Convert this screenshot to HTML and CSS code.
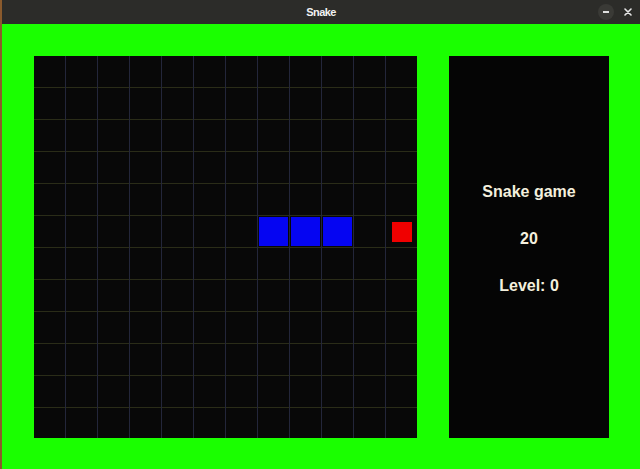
FILE: index.html
```html
<!DOCTYPE html>
<html>
<head>
<meta charset="utf-8">
<title>Snake</title>
<link rel="stylesheet" href="styles.css">
</head>
<body>
<div class="window">
  <div class="titlebar">
    <div class="tb-side"></div>
    <div class="tb-title">Snake</div>
    <div class="tb-side tb-buttons">
      <span class="tb-btn tb-min"><span class="dash"></span></span>
      <span class="tb-btn tb-close">
        <svg width="8" height="8" viewBox="0 0 8 8"><path d="M1 1L7 7M7 1L1 7" stroke="#e6e6e6" stroke-width="1.6" stroke-linecap="round"/></svg>
      </span>
    </div>
  </div>
  <div class="content">
    <div class="board">
      <div class="seg" style="grid-column:8;grid-row:6"></div>
      <div class="seg" style="grid-column:9;grid-row:6"></div>
      <div class="seg" style="grid-column:10;grid-row:6"></div>
      <div class="food" style="grid-column:12;grid-row:6"></div>
    </div>
    <div class="panel">
      <div class="line">Snake game</div>
      <div class="line">20</div>
      <div class="line">Level: 0</div>
    </div>
  </div>
</div>
</body>
</html>
```
FILE: styles.css
```css
html, body {
  margin: 0;
  padding: 0;
}
body {
  width: 640px;
  height: 469px;
  overflow: hidden;
  background: #8a5a2c;
  padding-left: 2px;
  box-sizing: border-box;
  display: flex;
}
.window {
  flex: 1;
  display: flex;
  flex-direction: column;
  background: #1aff00;
}
.titlebar {
  height: 24px;
  background: #2c2c29;
  display: grid;
  grid-template-columns: 1fr auto 1fr;
  align-items: center;
}
.tb-title {
  font-family: "Liberation Sans", Arial, sans-serif;
  font-weight: bold;
  font-size: 11px;
  letter-spacing: -0.6px;
  color: #f2f2f2;
}
.tb-buttons {
  display: flex;
  justify-content: flex-end;
  align-items: center;
  gap: 6px;
  padding-right: 4px;
}
.tb-btn {
  width: 16px;
  height: 16px;
  border-radius: 50%;
  display: flex;
  align-items: center;
  justify-content: center;
}
.tb-min {
  background: #3a3a36;
}
.dash {
  width: 6px;
  height: 1.5px;
  background: #e0e0e0;
}
.content {
  flex: 1;
  display: flex;
  align-items: flex-start;
  gap: 32px;
  padding: 32px 0 0 32px;
}
.board {
  width: 383px;
  height: 382px;
  overflow: hidden;
  background-color: #080808;
  background-image:
    repeating-linear-gradient(to right, transparent 0 31px, #23263a 31px 32px),
    repeating-linear-gradient(to bottom, transparent 0 31px, #2a2c18 31px 32px);
  display: grid;
  grid-template-columns: repeat(12, 32px);
  grid-template-rows: repeat(12, 32px);
}
.seg {
  margin: 1px 0 0 1px;
  width: 29px;
  height: 29px;
  background: #0505f2;
}
.food {
  place-self: center;
  width: 20px;
  height: 20px;
  background: #f00000;
}
.panel {
  width: 160px;
  height: 382px;
  background: #050505;
  box-sizing: border-box;
  padding-top: 127px;
  display: flex;
  flex-direction: column;
  align-items: center;
  gap: 29px;
}
.line {
  font-family: "Liberation Sans", Arial, sans-serif;
  font-weight: bold;
  font-size: 16px;
  line-height: 18px;
  color: #f4f0de;
}
```
